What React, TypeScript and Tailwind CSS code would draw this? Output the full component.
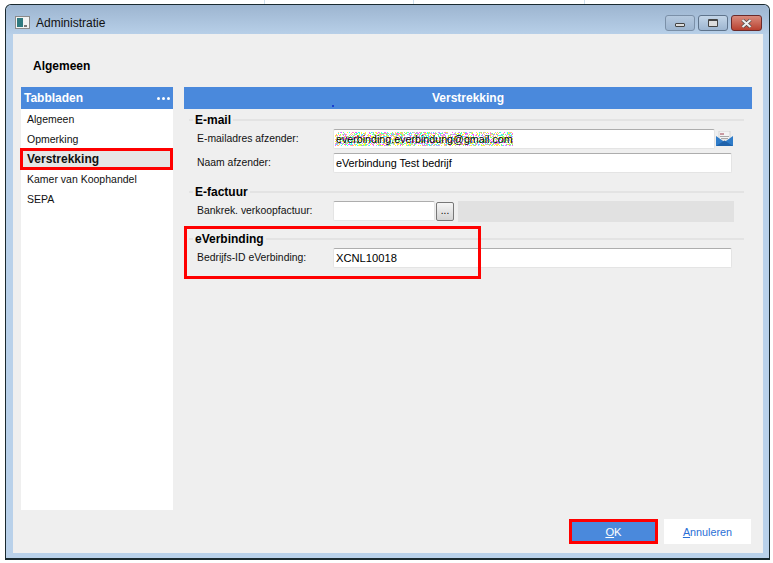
const font = "font-['Liberation_Sans',sans-serif]"

const tabs = ['Algemeen', 'Opmerking', 'Verstrekking', 'Kamer van Koophandel', 'SEPA']

// speckled rendering noise behind the e-mail address
const noiseColors = ['#ffff33', '#33ffff', '#ff55ff', '#b0b0ff', '#ffc080', '#80ff80']
const noise: { x: number; y: number; c: string }[] = []
let seed = 17
for (let y = 0; y < 14; y++) {
  for (let x = 0; x < 178; x++) {
    seed = (seed * 1103515245 + 12345) % 2147483648
    if ((seed >> 8) % 100 < 55) noise.push({ x, y, c: noiseColors[(seed >> 16) % 6] })
  }
}

function SectionHead({ label, className }: { label: string; className: string }) {
  return (
    <div className={`flex items-center h-4 ml-[5px] mr-2 ${className}`}>
      <div className="w-[4px] h-0.5 bg-[#e3e3e3]" />
      <span className="px-[2px] text-[12px] leading-4 font-bold text-black">{label}</span>
      <div className="flex-1 h-0.5 bg-[#e3e3e3]" />
    </div>
  )
}

function Field({ value, className = '', children }: { value?: string; className?: string; children?: React.ReactNode }) {
  return (
    <div className={`relative h-5 bg-white border border-[#e4e4e4] border-t-[#adadad] rounded-[2px] pl-[2px] leading-[18px] text-black ${className}`}>
      {children}
      <span className="relative">{value}</span>
    </div>
  )
}

function Row({ label, className = '', children }: { label: string; className?: string; children: React.ReactNode }) {
  return (
    <div className={`flex items-center h-5 ${className}`}>
      <span className="w-[149px] shrink-0 pl-[13px] text-[10.4px] text-[#111] whitespace-nowrap">{label}</span>
      {children}
    </div>
  )
}

export default function App() {
  return (
    <div className={`relative w-[773px] h-[563px] bg-white pt-1 pl-[5px] overflow-hidden ${font}`}>
      {/* bits of the page behind the dialog */}
      <div className="absolute left-[264px] top-0 w-px h-1 bg-[#cfe0ee]" />
      <div className="absolute left-[413px] top-0 w-px h-1 bg-[#cfe0ee]" />
      <div className="absolute left-[584px] top-0 w-px h-1 bg-[#cfe0ee]" />

      <div className="w-[765px] h-[556px] border border-[#1a2a30] border-b-2 rounded-t-[6px] bg-[#b9d1ea] flex flex-col">
        <header className="h-[29px] shrink-0 flex items-center pl-[9px] pr-[7px] pt-[6px] rounded-t-[6px] bg-gradient-to-b from-[#9db5d0] to-[#b7cfe8]">
          <svg width="16" height="14" viewBox="0 0 16 14" className="mr-[2px]">
            <rect x="0.5" y="0.5" width="14" height="12" fill="#f3f3f3" stroke="#8a8a8a" />
            <rect x="2" y="2" width="6" height="9" fill="#2f7a80" />
            <rect x="9" y="9" width="3" height="2" fill="#777" />
          </svg>
          <span className="ml-[3px] text-[12px] text-[#111]">Administratie</span>
          <div className="ml-auto flex items-start gap-[3px] self-start mt-[4px]">
            <div className="w-[30px] h-4 rounded-[3px] border border-[#7b90a8] bg-gradient-to-b from-[#b5c9df] to-[#9db5d0] flex items-center justify-center">
              <div className="w-[10px] h-1 mt-[3px] bg-[#ddd] border border-[#444] rounded-[1px]" />
            </div>
            <div className="w-[30px] h-4 rounded-[3px] border border-[#5f748c] bg-gradient-to-b from-[#c4d6e8] to-[#9db5d0] flex items-center justify-center">
              <div className="w-[10px] h-2 bg-[#ddd] border border-[#444] border-t-2 rounded-[1px]" />
            </div>
            <div className="w-[31px] h-4 rounded-[3px] border border-[#6b2a2a] bg-gradient-to-b from-[#d98a7c] to-[#b8402f] flex items-center justify-center">
              <svg width="11" height="9" viewBox="0 0 11 9">
                <path d="M1.5 1 L9.5 8 M9.5 1 L1.5 8" stroke="#444" strokeWidth="3.4" />
                <path d="M1.5 1 L9.5 8 M9.5 1 L1.5 8" stroke="#eee" strokeWidth="2.2" />
              </svg>
            </div>
          </div>
        </header>

        <main className="mx-[7px] w-[750px] h-[519px] bg-[#efefef] flex flex-col">
          <h1 className="ml-5 mt-[24px] h-4 text-[12px] leading-4 font-bold text-black">Algemeen</h1>

          <div className="mt-[13px] flex gap-[11px] pl-2">
            <aside className="w-[152px] h-[423px] bg-white">
              <div className="h-[22px] bg-[#4a89dc] flex items-center justify-between pl-[3px] pr-[3px] text-white">
                <span className="text-[12px] font-bold">Tabbladen</span>
                <span className="flex gap-[2px]">
                  <i className="w-[3px] h-[3px] rounded-full bg-white" />
                  <i className="w-[3px] h-[3px] rounded-full bg-white" />
                  <i className="w-[3px] h-[3px] rounded-full bg-white" />
                </span>
              </div>
              {tabs.map((t) => (
                <div
                  key={t}
                  className={`h-5 pl-[6px] leading-5 text-[#111] ${t === 'Verstrekking' ? 'bg-[#e6e6e6] font-bold text-[12px]' : 'text-[10.5px]'}`}
                >
                  {t}
                </div>
              ))}
            </aside>

            <section className="w-[568px]">
              <div className="relative h-[22px] bg-[#4a89dc] text-center text-[12px] leading-[22px] font-bold text-white">
                Verstrekking
                <div className="absolute left-[148px] bottom-[2px] w-0.5 h-0.5 bg-[#1a3fd0]" />
              </div>

              <SectionHead label="E-mail" className="mt-[3px]" />
              <Row label="E-mailadres afzender:" className="mt-[1px]">
                <Field className="w-[382px] text-[10.7px]" value="everbinding.everbindung@gmail.com">
                  <svg width="178" height="14" viewBox="0 0 178 14" shapeRendering="crispEdges" className="absolute left-[1px] top-[2px]">
                    {noise.map((p) => (
                      <rect key={`${p.x}-${p.y}`} x={p.x} y={p.y} width="1" height="1" fill={p.c} />
                    ))}
                  </svg>
                </Field>
                <svg width="17" height="16" viewBox="0 0 17 16" className="ml-[1px]">
                  <path d="M3 0 H14 V9 H3 Z" fill="#f4f4f4" stroke="#bbb" strokeWidth="0.5" />
                  <path d="M4 3 H8" stroke="#a04050" />
                  <path d="M4 5.500 H13 M5 7.500 H12" stroke="#aaa" />
                  <path d="M0 5 L8.500 11 L17 5 V15 H0 Z" fill="#2f7cc9" />
                  <path d="M0 15 L8.500 9.500 L17 15 Z" fill="#1f62ab" />
                </svg>
              </Row>
              <Row label="Naam afzender:" className="mt-1">
                <Field className="w-[399px] text-[10.8px]" value="eVerbindung Test bedrijf" />
              </Row>

              <SectionHead label="E-factuur" className="mt-[11px]" />
              <Row label="Bankrek. verkoopfactuur:" className="mt-[1px]">
                <Field className="w-[102px]" />
                <div className="ml-[1px] w-[18px] h-[19px] rounded-[2px] border border-[#777] bg-gradient-to-b from-[#f5f5f5] to-[#d4d4d4] text-center text-[10px] leading-[16px] text-black">...</div>
                <div className="ml-[4px] w-[276px] h-[21px] bg-[#e1e1e1]" />
              </Row>

              <SectionHead label="eVerbinding" className="mt-[10px]" />
              <Row label="Bedrijfs-ID eVerbinding:" className="mt-[1px]">
                <Field className="w-[399px] text-[11.2px]" value="XCNL10018" />
              </Row>
            </section>
          </div>

          <div className="mt-[9px] flex justify-end pr-3">
            <button className="w-[89px] h-[25px] pt-px bg-[#4a89dc] text-white text-[11.2px] border-[3px] border-[#ff0000]"><u>O</u>K</button>
            <button className="ml-[6px] w-[87px] h-[25px] pt-[2px] bg-white text-[#2a6fd6] text-[10.8px]"><u>A</u>nnuleren</button>
          </div>
        </main>
      </div>

      {/* annotations drawn over the dialog */}
      <div className="absolute left-5 top-[148px] w-[153px] h-[22px] border-[3px] border-[#ff0000]" />
      <div className="absolute left-[184px] top-[226px] w-[297px] h-[53px] border-[3px] border-[#ff0000]" />
    </div>
  )
}
